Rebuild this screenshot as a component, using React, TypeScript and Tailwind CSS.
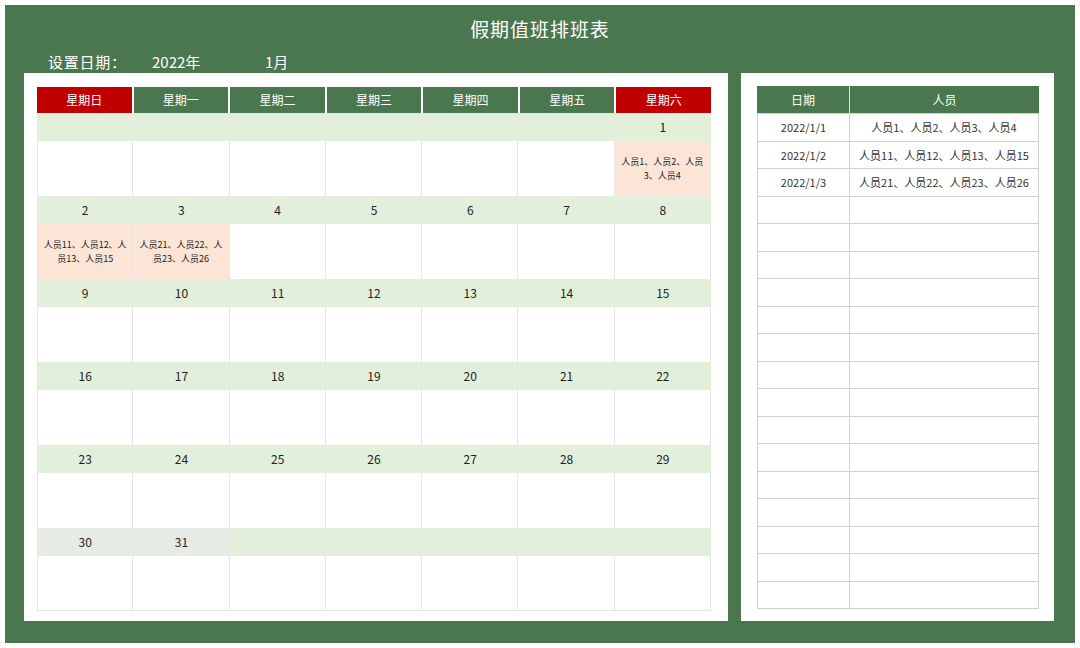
const font = { fontFamily: '"Noto Sans CJK SC", "Liberation Sans", sans-serif' };

const days = ["星期日", "星期一", "星期二", "星期三", "星期四", "星期五", "星期六"];

const weeks: (number | null)[][] = [
  [null, null, null, null, null, null, 1],
  [2, 3, 4, 5, 6, 7, 8],
  [9, 10, 11, 12, 13, 14, 15],
  [16, 17, 18, 19, 20, 21, 22],
  [23, 24, 25, 26, 27, 28, 29],
  [30, 31, null, null, null, null, null],
];

const duty: Record<number, string> = {
  1: "人员1、人员2、人员3、人员4",
  2: "人员11、人员12、人员13、人员15",
  3: "人员21、人员22、人员23、人员26",
};

const list = [
  ["2022/1/1", "人员1、人员2、人员3、人员4"],
  ["2022/1/2", "人员11、人员12、人员13、人员15"],
  ["2022/1/3", "人员21、人员22、人员23、人员26"],
];

export default function App() {
  const rows = [...list, ...Array.from({ length: 15 }, () => ["", ""])];
  return (
    <div className="w-[1080px] h-[648px] bg-white p-[5px]" style={font}>
      <div className="h-[638px] bg-[#4a774d] flex flex-col px-[19px]">
        <div className="h-[46px] flex items-center justify-center text-white text-[19px] tracking-wider pt-[2px]">
          假期值班排班表
        </div>
        <div className="h-[22px] flex items-center text-white text-[15px] pl-[24px]">
          <span className="w-[104px] tracking-wider">设置日期：</span>
          <span className="w-[113px]">2022年</span>
          <span>1月</span>
        </div>
        <div className="flex gap-[13px] h-[548px]">
          <div className="w-[704px] bg-white pl-[13px] pt-[14px]">
            <div className="w-[674px]">
              <div className="grid grid-cols-7 h-[26px] gap-x-[2px]">
                {days.map((d, i) => (
                  <div
                    key={d}
                    className={`flex items-center justify-center text-white text-[12px] ${i === 0 || i === 6 ? "bg-[#c00000]" : "bg-[#4a774d]"}`}
                  >
                    {d}
                  </div>
                ))}
              </div>
              {weeks.map((w, wi) => (
                <div key={wi}>
                  <div className="grid grid-cols-7 h-[28px] bg-[#e2efda]">
                    {w.map((d, i) => (
                      <div
                        key={i}
                        className={`flex items-center justify-center text-[12px] text-[#222] ${wi === 5 && d ? "bg-[#e6ebe4]" : ""}`}
                      >
                        {d ?? ""}
                      </div>
                    ))}
                  </div>
                  <div className="grid grid-cols-7 h-[55px]">
                    {w.map((d, i) => (
                      <div
                        key={i}
                        className={`flex items-center justify-center text-center text-[9px] leading-[14px] text-[#222] px-[4px] border-r border-[#e5e5e5] ${i === 0 ? "border-l" : ""} ${wi === 5 ? "border-b" : ""} ${d && duty[d] ? "bg-[#fce4d6]" : ""}`}
                      >
                        {d && duty[d] ? duty[d] : ""}
                      </div>
                    ))}
                  </div>
                </div>
              ))}
            </div>
          </div>
          <div className="w-[313px] bg-white pl-[16px] pt-[13px]">
            <div className="w-[282px] border-b border-[#ccc]">
              <div className="flex h-[27px] bg-[#4a774d] text-white text-[12px]">
                <div className="w-[93px] flex items-center justify-center border-r border-[#d9e6d2]">日期</div>
                <div className="flex-1 flex items-center justify-center">人员</div>
              </div>
              {rows.map((r, i) => (
                <div key={i} className="flex h-[27.5px] text-[11px] text-[#333] border-t border-[#d0d0d0] border-x">
                  <div className="w-[92px] flex items-center justify-center border-r border-[#d0d0d0]">{r[0]}</div>
                  <div className="flex-1 flex items-center justify-center whitespace-nowrap">{r[1]}</div>
                </div>
              ))}
            </div>
          </div>
        </div>
      </div>
    </div>
  );
}
